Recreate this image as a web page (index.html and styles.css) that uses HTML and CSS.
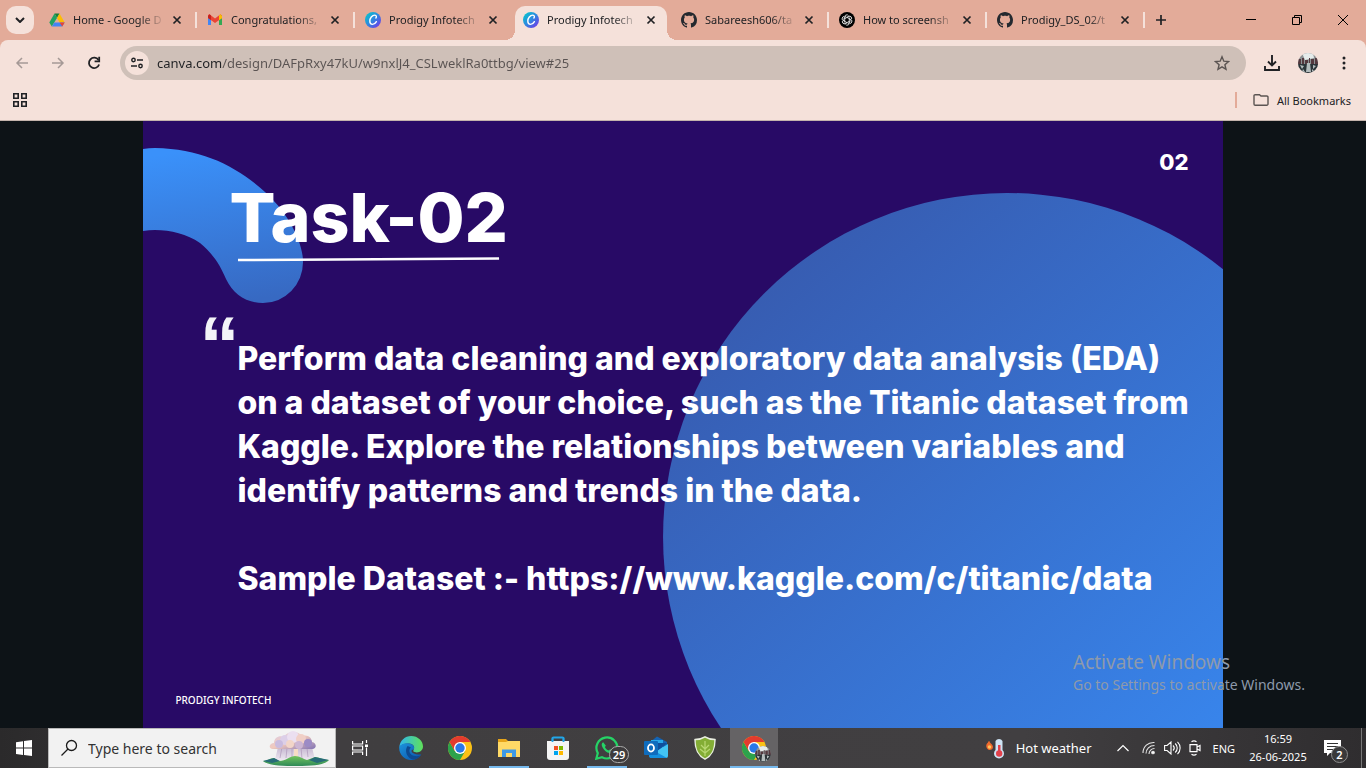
FILE: index.html
```html
<!DOCTYPE html>
<html lang="en">
<head>
<meta charset="utf-8">
<title>Prodigy Infotech</title>
<link rel="stylesheet" href="styles.css">
</head>
<body>
<svg class="defs" aria-hidden="true">
  <defs>
    <linearGradient id="canvaFill" x1="0" y1="0" x2="1" y2="1"><stop offset="0" stop-color="#00d0c8"/><stop offset=".5" stop-color="#2f86e0"/><stop offset="1" stop-color="#7d2ae8"/></linearGradient>
    <linearGradient id="edgeBlue" x1="0" y1="0" x2="1" y2="1"><stop offset="0" stop-color="#1c93dd"/><stop offset="1" stop-color="#0a52a8"/></linearGradient>
    <linearGradient id="edgeTop" x1="0" y1="0" x2="1" y2="0"><stop offset="0" stop-color="#2fb6ee"/><stop offset="1" stop-color="#5fe05a"/></linearGradient>
    <linearGradient id="cloud" x1="0" y1="0" x2="1" y2="1"><stop offset="0" stop-color="#d9cdea"/><stop offset=".5" stop-color="#f0c9bd"/><stop offset="1" stop-color="#7f72b4"/></linearGradient>
    <linearGradient id="rain" x1="0" y1="0" x2="0" y2="1"><stop offset="0" stop-color="#a58fb8"/><stop offset="1" stop-color="#eadff0"/></linearGradient>
    <linearGradient id="hill" x1="0" y1="0" x2="0" y2="1"><stop offset="0" stop-color="#74c45d"/><stop offset="1" stop-color="#2f8a58"/></linearGradient>
    <clipPath id="round"><circle cx="10" cy="10" r="10"/></clipPath>
    <symbol id="canva" viewBox="0 0 16 16"><circle cx="8" cy="8" r="8" fill="url(#canvaFill)"/><path d="M10.900 6c.9-1 .6-2.900-1.100-2.900-2.700 0-5 3.100-5 5.900 0 2 1.100 3.400 2.700 3.400 1.700 0 3.100-1.200 3.900-2.700" fill="none" stroke="#fff" stroke-width="1.400" stroke-linecap="round"/></symbol>
    <symbol id="github" viewBox="0 0 16 16"><path fill="#24292f" d="M8 0C3.580 0 0 3.580 0 8c0 3.540 2.290 6.530 5.470 7.590.4.070.55-.17.55-.38 0-.19-.01-.82-.01-1.490-2.010.37-2.530-.49-2.690-.94-.09-.23-.48-.94-.82-1.130-.28-.15-.68-.52-.01-.53.63-.01 1.080.58 1.230.82.72 1.210 1.870.87 2.330.66.07-.52.28-.87.51-1.070-1.780-.2-3.640-.89-3.640-3.950 0-.87.31-1.590.82-2.150-.08-.2-.36-1.020.08-2.120 0 0 .67-.21 2.200.82.64-.18 1.320-.27 2-.27s1.360.09 2 .27c1.530-1.040 2.200-.82 2.200-.82.44 1.100.16 1.920.08 2.120.51.56.82 1.270.82 2.150 0 3.070-1.870 3.750-3.650 3.950.29.25.54.73.54 1.480 0 1.070-.01 1.930-.01 2.200 0 .21.15.46.55.38A8.010 8.010 0 0 0 16 8c0-4.420-3.580-8-8-8z"/></symbol>
    <symbol id="x" viewBox="0 0 10 10"><path d="M1.500 1.500l7 7M8.500 1.500l-7 7" stroke="#202124" stroke-width="1.700"/></symbol>
    <symbol id="chrome" viewBox="0 0 24 24"><circle cx="12" cy="12" r="12" fill="#fbc116"/><path d="M1.600 6A12 12 0 0 0 12 24L17.200 15 6.800 15z" fill="#2da24c"/><path d="M12 6h10.400A12 12 0 0 0 1.600 6l5.200 9z" fill="#e33b2e"/><circle cx="12" cy="12" r="6" fill="#fff"/><circle cx="12" cy="12" r="4.700" fill="#2a78e8"/></symbol>
    <symbol id="avatar" viewBox="0 0 20 20"><g clip-path="url(#round)"><path fill="#8d9294" d="M0 0h20v20H0z"/><path fill="#e6eceb" d="M4 0h11l1 5-9 2z"/><path d="M0 6h3v5H0zM4 5h2v7H4zM7 7h3v4H7zM11 5h1v6h-1zM13 6h3v5h-3zM17 5h3v7h-3z" fill="#54393f"/><path d="M0 11h20v9H0z" fill="#2c3539"/><path d="M2 12l4 1-2 3zM9 10h3l1 9H8zM15 12l3 1-3 3zM5 16l2 3H4zM14 16l2 2-2 1z" fill="#b4bcbd"/></g></symbol>
  </defs>
</svg>

<header class="browser">
  <div class="strip">
    <button class="tab-search" aria-label="Search tabs"><svg width="10" height="6" viewBox="0 0 10 6"><path d="M1 1l4 4 4-4" fill="none" stroke="#202124" stroke-width="2"/></svg></button>
    <nav class="tabs">
      <div class="tab divided"><svg class="favicon" viewBox="0 0 16 16"><path d="M5.500 1.500h5L8 6z" fill="#188038"/><path d="M5.500 1.500L.3 10.500 2.800 14.500 8 6z" fill="#1ea362"/><path d="M10.500 1.500L15.700 10.500H10.600L8 6z" fill="#fbbc04"/><path d="M5.400 10.500h10.300l-2.500 4H2.800z" fill="#4285f4"/><path d="M10.600 10.500h5.100l-2.500 4z" fill="#ea4335"/></svg><span class="tab-title">Home - Google D</span><button class="tab-close" aria-label="Close tab"><svg width="10" height="10"><use href="#x"/></svg></button></div>
      <div class="tab divided"><svg class="favicon" viewBox="0 0 16 16"><path d="M1 3v10h3V6z" fill="#4285f4"/><path d="M15 3v10h-3V6z" fill="#34a853"/><path d="M1 3l1.500-.7L8 6.500l5.500-4.200L15 4v2L8 11 1 6z" fill="#ea4335"/><path d="M12 3.500l1.500-1.200L15 4v2.200l-3 2z" fill="#fbbc04"/><path d="M1 4v2l3 2V3.600L2.500 2.300z" fill="#c5221f"/></svg><span class="tab-title">Congratulations,</span><button class="tab-close" aria-label="Close tab"><svg width="10" height="10"><use href="#x"/></svg></button></div>
      <div class="tab"><svg class="favicon"><use href="#canva"/></svg><span class="tab-title">Prodigy Infotech</span><button class="tab-close" aria-label="Close tab"><svg width="10" height="10"><use href="#x"/></svg></button></div>
      <div class="tab active"><svg class="favicon"><use href="#canva"/></svg><span class="tab-title">Prodigy Infotech</span><button class="tab-close" aria-label="Close tab"><svg width="10" height="10"><use href="#x"/></svg></button></div>
      <div class="tab divided"><svg class="favicon"><use href="#github"/></svg><span class="tab-title">Sabareesh606/ta</span><button class="tab-close" aria-label="Close tab"><svg width="10" height="10"><use href="#x"/></svg></button></div>
      <div class="tab divided"><svg class="favicon" viewBox="0 0 16 16"><circle cx="8" cy="8" r="8" fill="#000"/><g fill="none" stroke="#e8e8e8" stroke-width=".8"><path id="petal" d="M5.700 7V4.900a2.100 2.100 0 0 1 3.900-1.100M5.700 6.700L8.700 5a2.100 2.100 0 0 1 2.600.5"/><use href="#petal" transform="rotate(60 8 8)"/><use href="#petal" transform="rotate(120 8 8)"/><use href="#petal" transform="rotate(180 8 8)"/><use href="#petal" transform="rotate(240 8 8)"/><use href="#petal" transform="rotate(300 8 8)"/></g></svg><span class="tab-title">How to screensh</span><button class="tab-close" aria-label="Close tab"><svg width="10" height="10"><use href="#x"/></svg></button></div>
      <div class="tab divided"><svg class="favicon"><use href="#github"/></svg><span class="tab-title">Prodigy_DS_02/t</span><button class="tab-close" aria-label="Close tab"><svg width="10" height="10"><use href="#x"/></svg></button></div>
    </nav>
    <button class="new-tab" aria-label="New tab"><svg width="12" height="12" viewBox="0 0 12 12"><path d="M6 1v10M1 6h10" stroke="#202124" stroke-width="1.700"/></svg></button>
    <div class="window-controls">
      <button aria-label="Minimize"><svg width="10" height="10"><path d="M0 4.500h10" stroke="#000"/></svg></button>
      <button aria-label="Restore"><svg width="10" height="10"><path d="M.5 2.500h7v7h-7zM2.500 2.500v-2h7v7h-2" fill="none" stroke="#000"/></svg></button>
      <button aria-label="Close"><svg width="10" height="10"><path d="M0 0l10 10M10 0L0 10" stroke="#000"/></svg></button>
    </div>
  </div>

  <div class="toolbar">
    <button class="tool" aria-label="Back"><svg width="14" height="12" viewBox="0 0 14 12"><path d="M13 6H2M7 1L2 6l5 5" fill="none" stroke="#a59996" stroke-width="1.500"/></svg></button>
    <button class="tool" aria-label="Forward"><svg width="14" height="12" viewBox="0 0 14 12"><path d="M1 6h11M7 1l5 5-5 5" fill="none" stroke="#a59996" stroke-width="1.500"/></svg></button>
    <button class="tool" aria-label="Reload"><svg width="14" height="14" viewBox="0 0 14 14"><path d="M11.500 4A5.200 5.200 0 1 0 12.100 8.500" fill="none" stroke="#202124" stroke-width="1.800"/><path d="M12.200.8v4.600H7.600" fill="none" stroke="#202124" stroke-width="1.800"/></svg></button>
    <div class="omnibox">
      <button class="site-info" aria-label="Site information"><svg width="12" height="12" viewBox="0 0 12 12" fill="none" stroke="#202124" stroke-width="1.400"><circle cx="2.500" cy="3" r="1.700"/><path d="M6 3h6M0 9h6"/><circle cx="9.500" cy="9" r="1.700"/></svg></button>
      <input class="url" type="text" aria-label="Address" value="canva.com/design/DAFpRxy47kU/w9nxlJ4_CSLweklRa0ttbg/view#25">
      <button class="star" aria-label="Bookmark"><svg width="16" height="16" viewBox="0 0 16 16"><path d="M8 1.800l1.800 4.400 4.700.4-3.600 3.100 1.100 4.600L8 11.900l-4 2.400 1.100-4.600L1.500 6.600l4.700-.4z" fill="none" stroke="#5b5452" stroke-width="1.400"/></svg></button>
    </div>
    <button class="tool" aria-label="Downloads"><svg width="16" height="16" viewBox="0 0 16 16"><path d="M8 0v10M4 6.500l4 4 4-4M1 11v4h14v-4" fill="none" stroke="#202124" stroke-width="1.900"/></svg></button>
    <button class="tool" aria-label="Profile"><svg width="20" height="20"><use href="#avatar"/></svg></button>
    <button class="tool" aria-label="Menu"><svg width="4" height="14" viewBox="0 0 4 14" fill="#202124"><circle cx="2" cy="2" r="1.500"/><circle cx="2" cy="7" r="1.500"/><circle cx="2" cy="12" r="1.500"/></svg></button>
  </div>

  <div class="bookmarks">
    <button class="apps" aria-label="Apps"><svg width="14" height="14" viewBox="0 0 14 14" fill="none" stroke="#202124" stroke-width="1.600"><path d="M.8.8h4.400v4.400H.8zM8.800.8h4.400v4.400H8.800zM.8 8.800h4.400v4.400H.8zM8.800 8.800h4.400v4.400H8.800z"/></svg></button>
    <button class="all-bookmarks"><svg width="16" height="12" viewBox="0 0 16 12"><path d="M1 2V10a1.200 1.200 0 0 0 1.200 1.200h11.600A1.200 1.200 0 0 0 15 10V3.200A1.200 1.200 0 0 0 13.800 2H8L6.500.7H2.200A1.200 1.200 0 0 0 1 2z" fill="none" stroke="#5b5452" stroke-width="1.400"/></svg>All Bookmarks</button>
  </div>
</header>

<main class="stage">
  <article class="slide">
    <svg class="decor" viewBox="0 0 1079 607" preserveAspectRatio="none" aria-hidden="true">
      <defs>
        <linearGradient id="disc" x1=".1" y1=".1" x2=".82" y2=".88"><stop offset="0" stop-color="#375aae"/><stop offset="1" stop-color="#3888f0"/></linearGradient>
        <linearGradient id="curl" x1=".4" y1="0" x2=".55" y2="1"><stop offset="0" stop-color="#3a91fa"/><stop offset="1" stop-color="#3769c2"/></linearGradient>
      </defs>
      <circle cx="864" cy="416" r="344" fill="url(#disc)"/>
      <path d="M0 28Q6 27 12 27C60 28 93 45 122 71C142 89 160 118 160 141A40 41 0 0 1 120 182C103 182 90 173 83 158C77 144 71 134 57 122C44 113 28 109 12 109Q6 109 0 110Z" fill="url(#curl)"/>
      <path d="M95 139L356 137.500" stroke="#fff" stroke-width="2.500"/>
    </svg>
    <p class="page-number">02</p>
    <h1 class="slide-title">Task-02</h1>
    <div class="quote-mark" aria-hidden="true">“</div>
    <div class="brief">
      <p>Perform data cleaning and exploratory data analysis (EDA)<br>on a dataset of your choice, such as the Titanic dataset from<br>Kaggle. Explore the relationships between variables and<br>identify patterns and trends in the data.</p>
      <p>Sample Dataset :- https://www.kaggle.com/c/titanic/data</p>
    </div>
    <p class="brand">PRODIGY INFOTECH</p>
  </article>
  <aside class="activation"><p class="activation-title">Activate Windows</p><p>Go to Settings to activate Windows.</p></aside>
</main>

<footer class="taskbar">
  <button class="start" aria-label="Start"><svg width="16" height="16" viewBox="0 0 16 16" fill="#fff"><path d="M0 2.200L7 1.200v6.400H0zM8 1.100L16 0v7.600H8zM0 8.500h7v6.400L0 13.900zM8 8.500h8V16l-8-1.100z"/></svg></button>
  <label class="search">
    <svg width="18" height="18" viewBox="0 0 18 18"><circle cx="11.500" cy="6.500" r="5" fill="none" stroke="#1b1b1b" stroke-width="1.300"/><path d="M8 10L1.500 16.500" stroke="#1b1b1b" stroke-width="1.300"/></svg>
    <input type="text" placeholder="Type here to search" aria-label="Type here to search">
    <svg class="scene" viewBox="0 0 66 37"><path d="M15 17h34l3 13H12z" fill="url(#rain)" opacity=".6"/><path d="M19 17l-2 11M24 18l-1 10M29 17v13M38 17l1 12M44 18l1 9" stroke="#a88fb5" stroke-width="1" opacity=".6"/><path d="M31 17h4v13h-4z" fill="#f6dcc4"/><path d="M10 19c-5 0-4-6 1-6 0-5 5-8 10-6 3-6 14-7 18-1 6-2 10 2 10 6 5 1 5 7 0 7z" fill="url(#cloud)"/><circle cx="22" cy="10" r="5" fill="#dccfe8"/><circle cx="30" cy="7" r="6" fill="#ebdff0"/><circle cx="38" cy="9" r="5" fill="#f0cfc6"/><circle cx="16" cy="14" r="4" fill="#c9bbdf"/><circle cx="27" cy="14" r="4" fill="#f2d5c8"/><circle cx="36" cy="15" r="4" fill="#cdb6d3"/><circle cx="45" cy="13" r="4" fill="#9c8bc5"/><path d="M0 31c6 0 6-3 11-3l5 3c7 0 11-5 16-5s8 3 12 4l8-3c4 0 8 3 14 3-4 5-16 6-32 6-14 0-28 0-34-5z" fill="url(#hill)"/><path d="M0 31l11-3 6 3-8 2zM46 30l6-3 14 3-12 3z" fill="#276b78"/></svg>
  </label>
  <div class="apps-row">
    <button class="app task-view" aria-label="Task View"><svg width="17" height="16" viewBox="0 0 17 16" fill="none" stroke="#fff" stroke-width="1.200"><path d="M.6 1v3h10V1M.6 15v-3h10v3M.6 6h10v4H.6zM14.500 0v3M14.500 7.500V16"/><path d="M13 4.500h3v2.500h-3z" fill="#fff" stroke="none"/></svg></button>
    <button class="app" aria-label="Edge"><svg width="24" height="24" viewBox="0 0 24 24"><path d="M.3 11.500C.8 4.600 6 0 12.200 0 19 0 24 5 24 10.600c0 3.500-2.800 5.800-6.300 5.800-2.800 0-4-1-3.200-2.300 2-3.300-.6-6.600-4.600-6.600C5 7.500 1.500 9 .3 11.500z" fill="url(#edgeTop)"/><path d="M.2 11C1.500 8.500 5 7 9 7.300c5 .4 7.400 3.700 5.500 6.600-3-1-4 5.100 7.900 4.600C17 25.500 9 25.500 4.200 21 1.300 18.500 0 15 .2 11z" fill="url(#edgeBlue)"/><path d="M8.600 10c-3.500 4.500-.8 12 5.400 13.500 3.200 0 5.800-1.500 7.400-4-5.400 2-11.900-.8-10.900-5.500.2-1.300 1.200-2.200 1.500-2.500z" fill="#0d4a91"/></svg></button>
    <button class="app" aria-label="Chrome"><svg width="24" height="24"><use href="#chrome"/></svg></button>
    <button class="app running" aria-label="File Explorer"><svg width="22" height="20" viewBox="0 0 22 20"><path d="M0 1h8l2 2h12v4H0z" fill="#e6a419"/><path d="M0 4h8l2-1h12v16H0z" fill="#ffd966"/><path d="M4 19v-7.500h14V19h-4v-4H8v4z" fill="#3f9ae5"/></svg></button>
    <button class="app" aria-label="Store"><svg width="24" height="24" viewBox="0 0 24 24"><path d="M6.500 7V2.500a1 1 0 0 1 1-1h9a1 1 0 0 1 1 1V7" fill="none" stroke="#22a6e8" stroke-width="1.800"/><path d="M1 5h22v16a3 3 0 0 1-3 3H4a3 3 0 0 1-3-3z" fill="#f4f4f4"/><path d="M6.500 1.500v4.500M17.500 1.500v4.500" stroke="#22a6e8" stroke-width="1.800"/><path d="M8 10h4v4H8z" fill="#f25022"/><path d="M13 10h4v4h-4z" fill="#7fba00"/><path d="M8 15h4v4H8z" fill="#00a4ef"/><path d="M13 15h4v4h-4z" fill="#ffb900"/></svg></button>
    <button class="app running" aria-label="WhatsApp"><svg width="24" height="24" viewBox="0 0 24 24"><path d="M1.300 22.700l1.500-5.600A10.500 10.500 0 1 1 7 21.200z" fill="none" stroke="#25d366" stroke-width="2.200"/><path d="M8.200 6.200c-1.700.6-2 2.800-.6 5.200 1.600 2.900 4 5 6.800 5.700 1.700.4 3.200-.7 3.200-2.400l-2.500-1.400-1.400 1.300c-1.700-.7-3-2-3.800-3.600l1-1.300z" fill="#25d366"/></svg><span class="badge count">29</span></button>
    <button class="app" aria-label="Outlook"><svg width="24" height="24" viewBox="0 0 24 24"><path d="M5 7l8-6.500L23 6v8H5z" fill="#1464b4"/><path d="M7 4h12v12H7z" fill="#28a8ea"/><path d="M14 7h9l-9 8z" fill="#0f4f9c"/><path d="M5 20l19-12v12a2 2 0 0 1-2 2H7z" fill="#43c4f3"/><path d="M5 12l18 10H7a2 2 0 0 1-2-2z" fill="#1490df"/><rect y="5" width="14" height="14" rx="1" fill="#0f6cbd"/><ellipse cx="7" cy="12" rx="3" ry="3.600" fill="none" stroke="#fff" stroke-width="1.800"/></svg></button>
    <button class="app" aria-label="Security"><svg width="22" height="24" viewBox="0 0 22 24"><path d="M11 .8c3 2 6 2.600 10 2.800 0 9-2 15.500-10 19.600C3 19.100 1 12.600 1 3.600c4-.2 7-.8 10-2.800z" fill="#83ad35" stroke="#e9eee0" stroke-width="1.500"/><path d="M11 5v15M11 13L7 9M11 13l4-4M11 17l-5-4M11 17l5-4" stroke="#b9d873" stroke-width="1.200"/></svg></button>
    <button class="app current" aria-label="Chrome window"><svg width="24" height="24"><use href="#chrome"/></svg><svg class="badge face" width="16" height="16" viewBox="0 0 20 20"><use href="#avatar" width="20" height="20"/></svg></button>
  </div>
  <div class="tray">
    <button class="weather"><svg width="20" height="22" viewBox="0 0 20 22"><path d="M3 13C-.5 11-.5 7.500 2 5.500c0-1 1-1.500 1.500-1.500-.2 2 3.500 3 3.500 6 0 2-2 3.500-4 3z" fill="#f06a2c"/><circle cx="3.500" cy="10" r="1.800" fill="#ffc45b"/><path d="M9.500 4a4 4 0 0 1 7 0v9a5 5 0 1 1-7 0z" fill="#cfe4f5"/><path d="M12 8h2.500v7H12z" fill="#e2414b"/><circle cx="13.200" cy="16.500" r="3.200" fill="#e2414b"/></svg>Hot weather</button>
    <div class="tray-icons">
      <button class="chevron" aria-label="Hidden icons"><svg width="12" height="8" viewBox="0 0 12 8"><path d="M.5 7L6 1.500 11.500 7" fill="none" stroke="#fff" stroke-width="1.200"/></svg></button>
      <button aria-label="Wi-Fi"><svg width="14" height="14" viewBox="0 0 14 14" fill="none" stroke="#e5e5e5" stroke-width="1.100"><path d="M1 12C1 5.500 6 1 12.500 1.500M4 12.500C4 8 7.500 4.500 12.500 4.500M7 13c0-3 2.500-5.500 5.500-5.500"/><circle cx="11" cy="11.500" r="1.300" fill="#fff"/></svg></button>
      <button aria-label="Volume"><svg width="17" height="14" viewBox="0 0 17 14" fill="none" stroke="#fff" stroke-width="1.100"><path d="M.6 4.500v5h2.500L7 13V1L3.100 4.500zM9 4.500c1.500 1.500 1.500 3.500 0 5M11.200 2.500c2.700 2.700 2.700 6.300 0 9M13.500.8c3.500 3.500 3.500 8.900 0 12.400"/></svg></button>
      <button aria-label="Meet now"><svg width="12" height="16" viewBox="0 0 12 16" fill="none" stroke="#fff" stroke-width="1.200"><path d="M1 4.600h7v7H1zM8 7l3-1.500v5L8 9M2.500 1.800Q5 0 7.500 1.800M2.500 14.200Q5 16 7.500 14.200"/></svg></button>
    </div>
    <button class="lang">ENG</button>
    <button class="clock"><span>16:59</span><span>26-06-2025</span></button>
    <button class="notifications" aria-label="Notifications, 2 new"><svg width="17" height="16" viewBox="0 0 17 16"><path d="M0 0h17v13H6l-3 3v-3H0z" fill="#fff"/><path d="M3 3.500h11M3 6.500h11M3 9.500h6" stroke="#333"/></svg><span class="badge notes">2</span></button>
    <span class="show-desktop"></span>
  </div>
</footer>
</body>
</html>
```
FILE: styles.css
```css
* { box-sizing: border-box; }
body {
  margin: 0;
  height: 100vh;
  display: flex;
  flex-direction: column;
  overflow: hidden;
  background: #0d1317;
  font-family: "Noto Sans", "Open Sans", sans-serif;
  font-size: 11px;
  color: #202124;
}
p, h1 { margin: 0; }
button {
  display: inline-flex;
  align-items: center;
  justify-content: center;
  padding: 0;
  border: 0;
  background: none;
  color: inherit;
  font: inherit;
  white-space: nowrap;
}
input { border: 0; padding: 0; outline: 0; background: none; font: inherit; min-width: 0; }
svg { flex: none; }
.defs { position: absolute; width: 0; height: 0; }

/* browser chrome */
.browser { background: #e3ab99; }
.strip { display: flex; height: 40px; padding-left: 6px; }
.tab-search { width: 28px; height: 28px; margin: 6px 7px 0 0; border-radius: 10px; background: #f5e1da; }
.tabs { display: flex; }
.tab {
  position: relative;
  display: flex;
  align-items: center;
  width: 152px;
  height: 34px;
  margin: 6px 6px 0 0;
  padding: 0 10px 6px 8px;
}
.favicon { width: 16px; height: 16px; margin-right: 8px; }
.tab-title {
  flex: 1;
  white-space: nowrap;
  line-height: 16px;
  -webkit-mask-image: linear-gradient(to right, #000 66px, transparent 92px);
  mask-image: linear-gradient(to right, #000 66px, transparent 92px);
}
.tab-close { width: 12px; height: 16px; margin-left: 8px; }
.divided::after { content: ""; position: absolute; right: -4px; top: 6px; width: 2px; height: 16px; background: #f5e1da; }
.active { background: #f5e1da; border-radius: 10px 10px 0 0; }
.active::before, .active::after { content: ""; position: absolute; bottom: 0; width: 10px; height: 10px; }
.active::before { left: -10px; background: radial-gradient(circle at 0 0, transparent 10px, #f5e1da 10px); }
.active::after { right: -10px; background: radial-gradient(circle at 100% 0, transparent 10px, #f5e1da 10px); }
.new-tab { width: 28px; height: 40px; }
.window-controls { display: flex; margin-left: auto; }
.window-controls button { width: 46px; height: 40px; }

.toolbar { display: flex; align-items: center; height: 46px; padding: 0 4px; background: #f5e1da; border-radius: 8px 8px 0 0; }
.tool { width: 36px; height: 34px; }
.omnibox { flex: 1; display: flex; align-items: center; height: 34px; margin: 0 8px; padding: 0 16px 0 5px; border-radius: 17px; background: #cfc0b8; }
.site-info { width: 24px; height: 24px; margin-right: 8px; border-radius: 50%; background: #f5e1da; }
.url {
  flex: 1;
  height: 20px;
  font-size: 13px;
  color: transparent;
  background: linear-gradient(to right, #202124 65px, #5a5352 65px);
  -webkit-background-clip: text;
  background-clip: text;
}
.bookmarks { display: flex; align-items: center; justify-content: space-between; height: 35px; padding: 0 15px 6px 13px; background: #f5e1da; border-bottom: 1px solid #c3b3ac; }
.all-bookmarks { gap: 8px; height: 16px; padding-left: 16px; border-left: 2px solid #e3ab99; }

/* presentation */
.stage { position: relative; flex: 1; min-height: 0; display: flex; justify-content: center; }
.slide {
  position: relative;
  height: 100%;
  aspect-ratio: 16 / 9;
  display: flex;
  flex-direction: column;
  overflow: hidden;
  padding: 28px 34px 20px 32px;
  background: #280a66;
  color: #fff;
  font-family: Inter, "Noto Sans", sans-serif;
  font-weight: 800;
}
.slide > * { position: relative; }
.slide .decor { position: absolute; inset: 0; width: 100%; height: 100%; }
.page-number { align-self: flex-end; font-size: 22px; line-height: 26px; }
.slide-title { margin-left: 54px; font-size: 68px; line-height: 84px; font-weight: 800; }
.quote-mark { height: 28px; margin: 50px 0 0 24px; font-family: "Liberation Sans", sans-serif; font-size: 80px; line-height: 72px; font-weight: 700; color: #f3f4f8; }
.brief { display: flex; flex-direction: column; gap: 44px; padding-left: 62px; font-size: 32px; line-height: 44px; white-space: nowrap; }
.brand { margin-top: auto; font-family: "Noto Sans", sans-serif; font-size: 10px; line-height: 16px; font-weight: 500; }
.activation { position: absolute; left: calc(50% + 390px); bottom: 33px; color: #8e9aab; font-size: 14px; line-height: 20px; white-space: nowrap; }
.activation-title { font-size: 19px; line-height: 26px; }

/* taskbar */
.taskbar { display: flex; height: 40px; color: #fff; background: linear-gradient(to right, #2b2a2b 0, #403e40 25%, #413f41 75%, #2f2d2f 100%); }
.start { width: 48px; }
.search { display: flex; align-items: center; width: 288px; padding: 0 6px 0 11px; border: 1px solid #b9b9b9; background: #f2f2f2; }
.search input { flex: 1; margin-left: 10px; font-size: 14px; color: #333; }
.search input::placeholder { color: #333; opacity: 1; }
.scene { width: 66px; height: 37px; }
.apps-row { display: flex; gap: 1px; }
.app { position: relative; width: 48px; }
.task-view { margin-right: 2px; }
.running::after, .current::after { content: ""; position: absolute; left: 4px; right: 4px; bottom: 0; height: 2px; background: #76b9ed; }
.current { background: #656365; }
.current::after { left: 0; right: 0; }
.badge { position: absolute; display: grid; place-items: center; border-radius: 10px; font-weight: 600; }
.count { left: 26px; top: 18px; width: 20px; height: 17px; border: 1px solid #aaa; background: #3d3b3d; }
.face { left: 25px; top: 18px; }
.tray { display: flex; margin-left: auto; }
.weather { gap: 10px; margin-right: 25px; font-size: 13px; }
.tray-icons { display: flex; align-items: center; gap: 8px; margin-right: 12px; }
.chevron { margin-right: 5px; }
.lang { margin-right: 13px; }
.clock { flex-direction: column; line-height: 18px; width: 60px; }
.notifications { position: relative; width: 48px; }
.notes { left: 23px; top: 18px; width: 17px; height: 17px; border: 1px solid #8e8e8e; background: #3a393a; }
.show-desktop { width: 5px; margin-left: 5px; border-left: 1px solid #777; }
```
